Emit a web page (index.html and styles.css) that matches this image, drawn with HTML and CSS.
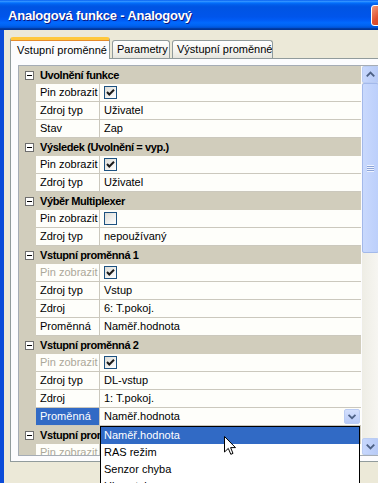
FILE: index.html
```html
<!DOCTYPE html>
<html lang="cs">
<head>
    <meta charset="UTF-8">
    <meta name="viewport" content="width=device-width, initial-scale=1.0">
    <link rel="stylesheet" href="styles.css">
</head>
<body>

<div class="window">
    <div class="titlebar">
        <span class="title">Analogová funkce - Analogový</span>
        <span class="close"></span>
    </div>

    <div class="frame">
        <div class="tabs">
            <div class="tab active">Vstupní proměnné</div>
            <div class="tab t2">Parametry</div>
            <div class="tab t3">Výstupní proměnné</div>
        </div>

        <div class="panel">
            <div class="grid">
                <div class="rows">
                    <div class="cat"><span class="toggle"></span>Uvolnění funkce</div>
                    <div class="prop"><span class="name">Pin zobrazit</span><span class="value"><span class="check"><svg viewBox="0 0 11 11"><path d="M2 5 L4.3 7.5 L9 2.8"/></svg></span></span></div>
                    <div class="prop"><span class="name">Zdroj typ</span><span class="value">Uživatel</span></div>
                    <div class="prop"><span class="name">Stav</span><span class="value">Zap</span></div>

                    <div class="cat"><span class="toggle"></span>Výsledek (Uvolnění = vyp.)</div>
                    <div class="prop"><span class="name">Pin zobrazit</span><span class="value"><span class="check"><svg viewBox="0 0 11 11"><path d="M2 5 L4.3 7.5 L9 2.8"/></svg></span></span></div>
                    <div class="prop"><span class="name">Zdroj typ</span><span class="value">Uživatel</span></div>

                    <div class="cat"><span class="toggle"></span>Výběr Multiplexer</div>
                    <div class="prop"><span class="name">Pin zobrazit</span><span class="value"><span class="check"></span></span></div>
                    <div class="prop"><span class="name">Zdroj typ</span><span class="value">nepoužívaný</span></div>

                    <div class="cat"><span class="toggle"></span>Vstupní proměnná 1</div>
                    <div class="prop"><span class="name dim">Pin zobrazit</span><span class="value"><span class="check"><svg viewBox="0 0 11 11"><path d="M2 5 L4.3 7.5 L9 2.8"/></svg></span></span></div>
                    <div class="prop"><span class="name">Zdroj typ</span><span class="value">Vstup</span></div>
                    <div class="prop"><span class="name">Zdroj</span><span class="value">6: T.pokoj.</span></div>
                    <div class="prop"><span class="name">Proměnná</span><span class="value">Naměř.hodnota</span></div>

                    <div class="cat"><span class="toggle"></span>Vstupní proměnná 2</div>
                    <div class="prop"><span class="name dim">Pin zobrazit</span><span class="value"><span class="check"><svg viewBox="0 0 11 11"><path d="M2 5 L4.3 7.5 L9 2.8"/></svg></span></span></div>
                    <div class="prop"><span class="name">Zdroj typ</span><span class="value">DL-vstup</span></div>
                    <div class="prop"><span class="name">Zdroj</span><span class="value">1: T.pokoj.</span></div>
                    <div class="prop selected"><span class="name">Proměnná</span><span class="value">Naměř.hodnota<span class="combo-btn"><svg viewBox="0 0 16 15"><path d="M4 5.5 L8 9.5 L12 5.5"/></svg></span></span></div>

                    <div class="cat"><span class="toggle"></span>Vstupní proměnná 3</div>
                    <div class="prop"><span class="name dim">Pin zobrazit</span><span class="value"></span></div>
                </div>

                <div class="scrollbar">
                    <div class="sb-btn"><svg viewBox="0 0 16 16"><path d="M4 10 L8 6 L12 10"/></svg></div>
                    <div class="sb-thumb"><span class="grip"></span></div>
                    <div class="sb-track"></div>
                    <div class="sb-btn"><svg viewBox="0 0 16 16"><path d="M4 6 L8 10 L12 6"/></svg></div>
                </div>
            </div>
        </div>
    </div>

    <!-- open list of the "Proměnná" combo -->
    <div class="popup">
        <div class="item hot">Naměř.hodnota</div>
        <div class="item">RAS režim</div>
        <div class="item">Senzor chyba</div>
        <div class="item">Ukazatel</div>
    </div>

    <svg class="cursor" viewBox="0 0 12 20" width="12" height="20">
        <path d="M0.5 0.5 L0.5 16 L4.3 12.4 L6.8 18.3 L9 17.4 L6.6 11.6 L11.5 11.6 Z"/>
    </svg>
</div>

</body>
</html>
```

FILE: styles.css
```css
body {
    margin: 0;
    width: 378px;
    height: 483px;
    overflow: hidden;
    background: #ECE9D8;
    font-family: "Liberation Sans", Arial, sans-serif;
    font-size: 11px;
    color: #000;
}

.window {
    position: relative;
    width: 400px;
    height: 483px;
}

/* title bar */
.titlebar {
    height: 30px;
    display: flex;
    align-items: center;
    padding-left: 8px;
    box-sizing: border-box;
    background: linear-gradient(to bottom, #0058EE 0%, #3593FF 4%, #288EFF 6%, #127DFF 8%, #036FFC 10%, #0262EE 14%, #0057E5 20%, #0054E3 24%, #0055EB 56%, #005BF5 66%, #026AFE 76%, #0062EF 86%, #0052D6 92%, #0040AB 94%, #003092 100%);
}

.title {
    color: #fff;
    font-weight: bold;
    font-size: 13px;
    letter-spacing: -0.2px;
    text-shadow: 1px 1px #0A1883;
}

.close {
    margin-left: auto;
    margin-right: 8px;
    width: 21px;
    height: 21px;
    box-sizing: border-box;
    border: 1px solid #fff;
    border-radius: 3px;
    background: linear-gradient(135deg, #F09A7A, #E0502E 45%, #C8391A);
}

/* client area */
.frame {
    height: 453px;
    box-sizing: border-box;
    border-left: 4px solid #0B4CD9;
    padding-top: 7px;
    background: #ECE9D8;
}

.tabs {
    display: flex;
    align-items: flex-end;
    height: 21px;
    margin-left: 6px;
}

.tab {
    height: 18px;
    box-sizing: border-box;
    border: 1px solid #919B9C;
    border-bottom: none;
    border-radius: 3px 3px 0 0;
    padding: 2px 0 0 4px;
    background: linear-gradient(#FFFFFF, #F3F3EF 60%, #E6E5DE);
    white-space: nowrap;
    overflow: hidden;
}

.tab.active {
    position: relative;
    z-index: 1;
    width: 100px;
    height: 22px;
    margin-bottom: -1px;
    padding: 4px 0 0 6px;
    border-top: 3px solid #FFC83C;
    box-shadow: inset 0 1px 0 #E68B2C;
    background: #FCFCFE;
}

.tab.t2 {
    width: 58px;
    margin-left: 2px;
}

.tab.t3 {
    width: 101px;
    margin-left: 2px;
}

.panel {
    margin-left: 6px;
    border: 1px solid #919B9C;
    padding: 6px 0 5px 7px;
    background: #FCFCFE;
}

/* property grid */
.grid {
    display: flex;
    border: 1px solid #A5ACB5;
    border-right: none;
}

.rows {
    width: 342px;
    height: 389px;
    overflow: hidden;
    background: #FEFEFA;
}

.cat {
    height: 18px;
    display: flex;
    align-items: center;
    background: #D1CDBC;
    font-weight: bold;
    letter-spacing: -0.4px;
    white-space: nowrap;
}

.toggle {
    position: relative;
    width: 9px;
    height: 9px;
    box-sizing: border-box;
    margin: 0 6px 0 6px;
    border: 1px solid #6E6E6E;
    background: #fff;
}

.toggle::after {
    content: "";
    position: absolute;
    left: 1px;
    top: 3px;
    width: 5px;
    height: 1px;
    background: #000;
}

.prop {
    display: flex;
    height: 18px;
    border-left: 17px solid #D1CDBC;
}

.name,
.value {
    box-sizing: border-box;
    height: 18px;
    line-height: 17px;
    padding-left: 4px;
    border-bottom: 1px solid #CBC8BD;
    white-space: nowrap;
}

.name {
    width: 64px;
    border-right: 1px solid #CBC8BD;
}

.name.dim {
    color: #ACA899;
}

.value {
    flex: 1;
    display: flex;
    align-items: center;
}

.prop.selected .name {
    background: #316AC5;
    color: #fff;
}

.check {
    width: 13px;
    height: 13px;
    box-sizing: border-box;
    border: 1px solid #1C5180;
    background: linear-gradient(135deg, #DCDCD7, #FFFFFF);
}

.check svg {
    display: block;
    width: 11px;
    height: 11px;
}

.check path {
    fill: none;
    stroke: #1A1A1A;
    stroke-width: 2;
}

.combo-btn {
    margin-left: auto;
    margin-right: 1px;
    width: 16px;
    height: 15px;
    box-sizing: border-box;
    border: 1px solid #BACCF3;
    border-radius: 2px;
    background: linear-gradient(#D4E0FD, #B9CBF6);
}

.combo-btn svg {
    display: block;
    width: 14px;
    height: 13px;
}

.combo-btn path,
.sb-btn path {
    fill: none;
    stroke: #4D6185;
    stroke-width: 2;
}

/* scrollbar */
.scrollbar {
    width: 17px;
    margin-left: 1px;
    display: flex;
    flex-direction: column;
    background: linear-gradient(to right, #EEEDE5, #F7F6F2);
}

.sb-btn {
    height: 17px;
    box-sizing: border-box;
    border: 1px solid #BACCF3;
    border-radius: 2px;
    background: linear-gradient(to right, #C7D7FD, #B7CAF6);
}

.sb-btn svg {
    display: block;
    width: 15px;
    height: 15px;
}

.sb-thumb {
    height: 170px;
    box-sizing: border-box;
    border: 1px solid #A3B9EA;
    border-radius: 2px;
    background: linear-gradient(to right, #C9D9FD, #BCCFFB);
    display: flex;
    align-items: center;
    justify-content: center;
}

.grip {
    width: 7px;
    height: 7px;
    background: repeating-linear-gradient(#EEF3FF 0 1px, #8CA4D8 1px 2px);
}

.sb-track {
    flex: 1;
}

/* open dropdown list */
.popup {
    position: absolute;
    left: 100px;
    top: 426px;
    width: 260px;
    box-sizing: border-box;
    border: 1px solid #000;
    background: #fff;
}

.item {
    height: 17px;
    line-height: 17px;
    padding-left: 3px;
    white-space: nowrap;
}

.item.hot {
    background: #316AC5;
    color: #fff;
}

.cursor {
    position: absolute;
    left: 224px;
    top: 436px;
}

.cursor path {
    fill: #fff;
    stroke: #000;
    stroke-width: 1;
}
```
